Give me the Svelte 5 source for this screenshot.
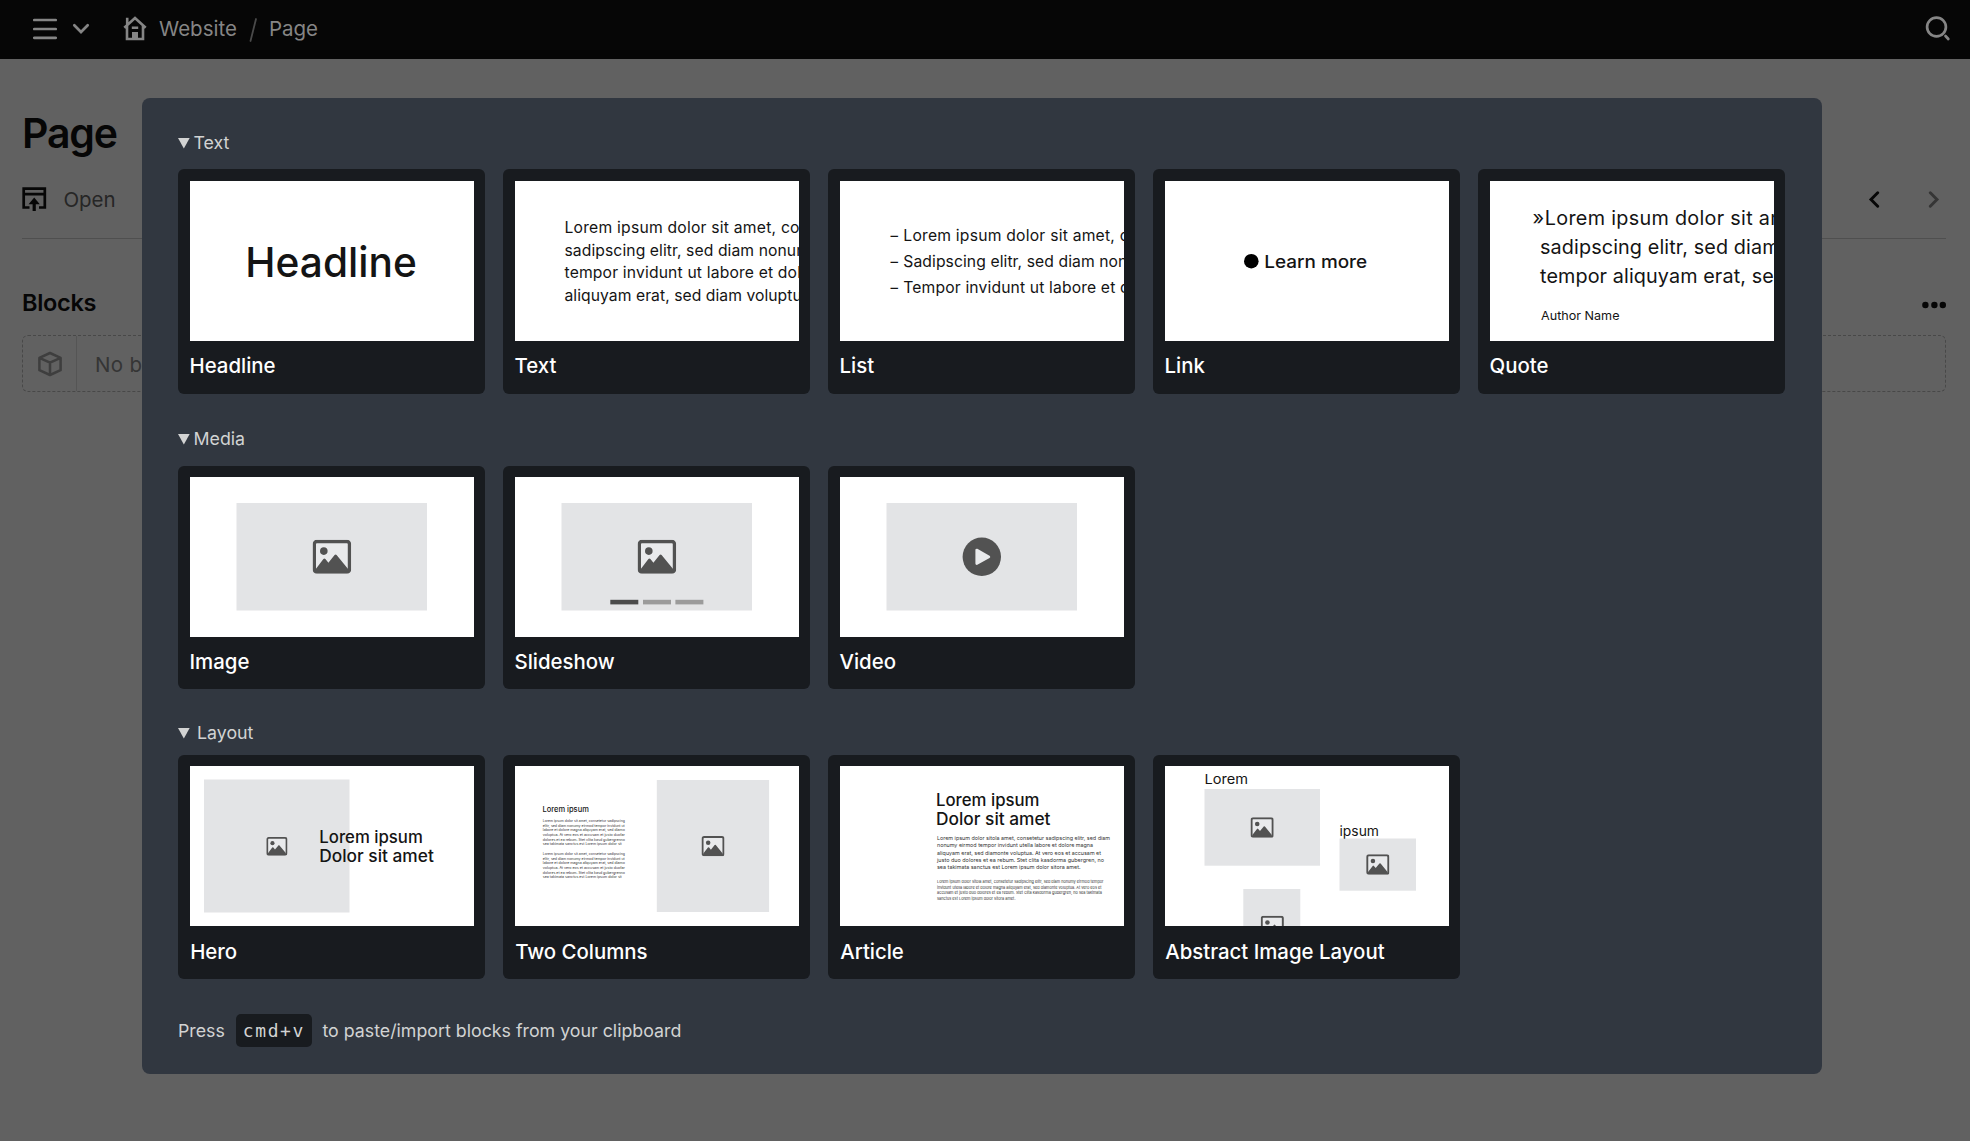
<script>
  // Each preview is drawn on a 284 x 160 canvas.
  // Text lines: [x, baseline, text, size, weight, width?, letter spacing?]
  const para = [
    'Lorem ipsum dolor sit amet, consetetur sadipscing',
    'elitr, sed diam nonumy eirmod tempor invidunt ut',
    'labore et dolore magna aliquyam erat, sed diamo',
    'voluptua. At vero eos et accusam et justo duofar',
    'dolores et ea rebum. Stet clita kasd gubergrenno',
    'sea takimata sanctus est Lorem ipsum dolor sit'
  ];
  const column = (top) =>
    para.map((t, i) => [27.8, top + i * 4.67, t, 3.6, 400, i === 5 ? 79 : 82]);

  const groups = [
    {
      name: 'Text',
      key: 'text',
      cards: [
        { label: 'Headline', texts: [[55.3, 96, 'Headline', 41.5, 500, 171.5]] },
        {
          label: 'Text',
          texts: [
            [49.5, 52.3, 'Lorem ipsum dolor sit amet, consetetur', 15.7, 400, undefined, 0.22],
            [49.5, 74.8, 'sadipscing elitr, sed diam nonumy eirmod', 15.7, 400, undefined, 0.08],
            [49.5, 97.3, 'tempor invidunt ut labore et dolore', 15.7, 400, undefined, 0.16],
            [49.5, 119.8, 'aliquyam erat, sed diam voluptua.', 15.7, 400, undefined, 0.05]
          ]
        },
        {
          label: 'List',
          texts: [
            [50.5, 60.2, '–', 15.7, 400, 7.5],
            [63.3, 60.2, 'Lorem ipsum dolor sit amet, consetetur', 15.7, 400, undefined, 0.22],
            [50.5, 86, '–', 15.7, 400, 7.5],
            [63.3, 86, 'Sadipscing elitr, sed diam nonumy', 15.7, 400, undefined, 0.08],
            [50.5, 112, '–', 15.7, 400, 7.5],
            [63.3, 112, 'Tempor invidunt ut labore et dolore', 15.7, 400, undefined, 0.14]
          ]
        },
        { label: 'Link', dot: true, texts: [[99.2, 86.5, 'Learn more', 17.5, 500, 103]] },
        {
          label: 'Quote',
          texts: [
            [42.5, 44.2, '»', 20, 400],
            [54.8, 44.2, 'Lorem ipsum dolor sit amet', 19.8, 400, undefined, 0.3],
            [50, 73, 'sadipscing elitr, sed diam nonumy', 19.8, 400, undefined, 0.12],
            [50, 101.8, 'tempor aliquyam erat, sed diam', 19.8, 400, undefined, 0.1],
            [51, 138.7, 'Author Name', 12.2, 400, 78.5]
          ]
        }
      ]
    },
    {
      name: 'Media',
      key: 'media',
      cards: [
        { label: 'Image', rects: [[46.5, 26, 190.5, 107.5]], icons: [[122.6, 62.8, 38.6]] },
        {
          label: 'Slideshow',
          rects: [[46.5, 26, 190.5, 107.5]],
          icons: [[122.6, 62.8, 38.6]],
          bars: true
        },
        { label: 'Video', rects: [[46.5, 26, 190.5, 107.5]], play: true }
      ]
    },
    {
      name: 'Layout',
      key: 'layout',
      cards: [
        {
          label: 'Hero',
          rects: [[14, 13.5, 145.5, 133]],
          icons: [[76.3, 71, 21.2]],
          texts: [
            [129.3, 77, 'Lorem ipsum', 16.8, 500, 103.5],
            [129.3, 95.7, 'Dolor sit amet', 16.8, 500, 114.5]
          ]
        },
        {
          label: 'Two Columns',
          rects: [[141.8, 14, 112.3, 132]],
          icons: [[186.5, 70, 23]],
          texts: [[27.5, 46, 'Lorem ipsum', 7.6, 500, 46.3], ...column(56), ...column(89)]
        },
        {
          label: 'Article',
          texts: [
            [96, 40.3, 'Lorem ipsum', 16.8, 500, 103.5],
            [96, 59, 'Dolor sit amet', 16.8, 500, 114.5],
            [97, 73.5, 'Lorem ipsum dolor sitola amet, consetetur sadipscing elitr, sed diam', 5.3, 400, 173],
            [97, 81, 'nonumy eirmod tempor invidunt utella labore et dolore magna', 5.3, 400, 156],
            [97, 88.5, 'aliquyam erat, sed diamonte voluptua. At vero eos et accusam et', 5.3, 400, 164],
            [97, 95.9, 'justo duo dolores et ea rebum. Stet clita kasdorma gubergren, no', 5.3, 400, 167],
            [97, 103.3, 'sea takimata sanctus est Lorem ipsum dolor sitora amet.', 5.3, 400, 143.5],
            [97, 117.2, 'Lorem ipsum dolor sitola amet, consetetur sadipscing elitr, sed diam nonumy eirmod tempor', 3.8, 400, 166.5],
            [97, 122.7, 'invidunt utella labore et dolore magna aliquyam erat, sed diamonte voluptua. At vero eos et', 3.8, 400, 164.5],
            [97, 128.3, 'accusam et justo duo dolores et ea rebum. Stet clita kasdorma gubergren, no sea takimata', 3.8, 400, 165],
            [97, 133.8, 'sanctus est Lorem ipsum dolor sitora amet.', 3.8, 400, 78.5]
          ]
        },
        {
          label: 'Abstract Image Layout',
          rects: [
            [39.5, 23, 115.5, 76.7],
            [174.5, 72.5, 76.5, 52.2],
            [78.3, 123, 57, 50]
          ],
          icons: [
            [85.5, 51.3, 23.2],
            [201.2, 88.3, 23.2],
            [95.7, 149.7, 23.2]
          ],
          texts: [
            [39.5, 18, 'Lorem', 13.6, 400, 43.5],
            [174.5, 69.7, 'ipsum', 13.6, 400, 39.5]
          ]
        }
      ]
    }
  ];
</script>

<div class="page">
  <header>
    <svg class="menu" width="24" height="24" viewBox="0 0 24 24"><path d="M1.3 3h21.4M1.3 12h21.4M1.3 20.8h21.4" /></svg>
    <svg class="chev" width="18" height="12" viewBox="0 0 18 12"><path d="M2.3 2.3 9 9l6.7-6.7" /></svg>
    <svg class="house" width="24" height="25" viewBox="0 0 24 25"><path d="M4 9.5V23h16V9.5M1.3 11.8 12 2l10.7 9.8M4.2 9V1.8" /><path class="door" d="M9 24v-8h6v8zM8.8 10.4h6.4V13H8.8z" /></svg>
    <span class="crumb site">Website</span>
    <svg class="slash" width="9" height="24" viewBox="0 0 9 24"><path d="M1.5 23 7 1" /></svg>
    <span class="crumb">Page</span>
    <svg class="search" width="26" height="26" viewBox="0 0 26 26"><circle cx="11.5" cy="11" r="9.4" /><path d="m20.5 20 2.8 3" /></svg>
  </header>

  <main>
    <h1>Page</h1>
    <div class="toolbar">
      <svg width="25" height="25" viewBox="0 0 25 25" class="open-icon"><path d="M7.5 20.5H1.7V1.7h21.1v18.8H17M1.7 7.2h21.1" /><path d="M12.2 24V14" class="stem" /><path d="m12.2 10.6 5.6 6.6H6.6z" class="tip" /></svg>
      <span>Open</span>
      <div class="pager">
        <svg width="12" height="17" viewBox="0 0 12 17"><path d="M9.7 1.8 3 8.5l6.7 6.7" /></svg>
        <svg class="next" width="12" height="17" viewBox="0 0 12 17"><path d="M2.3 1.8 9 8.5l-6.7 6.7" /></svg>
      </div>
    </div>
    <div class="blocks-head">
      <h2>Blocks</h2>
      <svg width="26" height="8" viewBox="0 0 26 8"><circle cx="5.4" cy="4" r="3.2" /><circle cx="14.4" cy="4" r="3.2" /><circle cx="22.8" cy="4" r="3.2" /></svg>
    </div>
    <div class="empty">
      <div class="cube">
        <svg width="26" height="26" viewBox="0 0 26 26"><path d="M13 2 23.6 6.8v12.4L13 24 2.4 19.2V6.8zM2.4 6.8 13 11.6l10.6-4.8M13 11.6V24" /></svg>
      </div>
      <span>No blocks yet</span>
    </div>
  </main>

  <div class="dialog" role="dialog">
    {#each groups as group}
      <section class={group.key}>
        <div class="summary">
          <svg width="12" height="11" viewBox="0 0 12 11"><path d="M0 0h11.7L5.85 10.6z" /></svg>
          <span>{group.name}</span>
        </div>
        <div class="cards">
          {#each group.cards as card}
            <div class="card">
              <svg class="preview" viewBox="0 0 284 160" preserveAspectRatio="none">
                <rect width="284" height="160" fill="#fff" />
                {#each card.rects ?? [] as [x, y, w, h]}
                  <rect {x} {y} width={w} height={h} fill="#e3e4e6" />
                {/each}
                {#each card.icons ?? [] as [x, y, w]}
                  <svg {x} {y} width={w} height={w * 0.88} viewBox="0 0 38.6 34">
                    <rect x="1.7" y="1.7" width="35.2" height="30.6" rx="2.6" fill="#e9eaec" stroke="#525252" stroke-width="3.4" />
                    <circle cx="11.2" cy="11.3" r="3.8" fill="#525252" />
                    <path d="M3 29.5 10.8 19.3q1-1 2 0l3 3.6 6.2-7.6q1-1 2 0L35.5 29.3V32H3z" fill="#525252" />
                  </svg>
                {/each}
                {#if card.bars}
                  <rect x="95.3" y="122.8" width="28" height="4.6" fill="#4c4c4c" />
                  <rect x="128" y="122.8" width="28" height="4.6" fill="#9b9b9b" />
                  <rect x="160.4" y="122.8" width="28" height="4.6" fill="#9b9b9b" />
                {/if}
                {#if card.play}
                  <circle cx="141.8" cy="79.8" r="19.2" fill="#525252" />
                  <path d="M136.7 73v13.6l12.2-6.8z" fill="#e9eaec" stroke="#e9eaec" stroke-width="2.6" stroke-linejoin="round" />
                {/if}
                {#if card.dot}
                  <circle cx="86.3" cy="80.2" r="7.3" fill="#000" />
                {/if}
                {#each card.texts ?? [] as [x, y, text, size, weight, width, spacing]}
                  <text
                    {x}
                    {y}
                    class:fine={size < 7}
                    font-size={size}
                    font-weight={weight}
                    letter-spacing={spacing}
                    textLength={width}
                    lengthAdjust="spacingAndGlyphs">{text}</text>
                {/each}
              </svg>
              <div class="label">{card.label}</div>
            </div>
          {/each}
        </div>
      </section>
    {/each}
    <footer><span>Press</span><kbd>cmd+v</kbd><span>to paste/import blocks from your clipboard</span></footer>
  </div>
</div>

<style>
  :global(body) { background: #616161; }
  .page {
    position: relative;
    height: 1141px;
    overflow: hidden;
    background: #616161;
    font-family: Inter, 'Liberation Sans', sans-serif;
  }
  svg { display: block; flex: none; }
  header {
    display: flex;
    align-items: center;
    box-sizing: border-box;
    height: 58.5px;
    padding: 0 19px 1px 33px;
    background: #060606;
    color: #858585;
  }
  header svg { fill: none; stroke: #858585; stroke-width: 2.7; stroke-linecap: round; }
  .chev { margin-left: 15px; }
  .house { margin-left: 33px; }
  header .house { stroke-width: 2.6; stroke-linecap: butt; }
  header .door { fill: #858585; stroke: none; }
  .crumb { font-size: 20.5px; line-height: 24px; letter-spacing: 0; }
  .site { margin-left: 12px; }
  .slash { margin: 3px 11px 0 12px; }
  header .slash { stroke: #4a4a4a; stroke-width: 1.8; }
  .search { margin-left: auto; }
  header .search { stroke-width: 2.7; }

  main { padding: 0 24px 0 22px; }
  h1 {
    margin: 0;
    padding-top: 49.5px;
    font-size: 41px;
    line-height: 50px;
    font-weight: 600;
    letter-spacing: -1.2px;
    color: #060606;
  }
  .toolbar {
    display: flex;
    align-items: center;
    box-sizing: border-box;
    height: 81px;
    padding-top: 3px;
    border-bottom: 1px solid #4f4f4f;
    font-size: 20.5px;
    color: #262626;
  }
  .toolbar span { margin-left: 16.5px; letter-spacing: -0.1px; }
  .open-icon path { fill: none; stroke: #060606; stroke-width: 2.7; }
  .open-icon .stem { stroke-width: 3.2; }
  .open-icon .tip { fill: #060606; stroke: none; }
  .pager { display: flex; gap: 48px; margin-left: auto; padding-right: 6px; }
  .pager path { fill: none; stroke: #060606; stroke-width: 2.9; stroke-linecap: round; }
  .pager .next path { stroke: #353535; }
  .blocks-head {
    display: flex;
    align-items: center;
    justify-content: space-between;
    height: 30px;
    padding-top: 48.5px;
  }
  h2 { margin: 0; font-size: 23.5px; font-weight: 600; letter-spacing: -0.3px; color: #060606; }
  .blocks-head svg { margin-top: 5px; fill: #060606; }
  .empty {
    display: flex;
    box-sizing: border-box;
    height: 57px;
    margin-top: 17.5px;
    border: 1px dashed #484848;
    border-radius: 6px;
    font-size: 20.5px;
    line-height: 57px;
    color: #353535;
  }
  .cube {
    display: flex;
    align-items: center;
    justify-content: center;
    width: 53px;
    border-right: 1px solid #555;
  }
  .cube path { fill: none; stroke: #3e3e3e; stroke-width: 2.5; stroke-linejoin: round; }
  .empty span { margin-left: 18px; letter-spacing: 0.3px; }

  .dialog {
    position: absolute;
    top: 98px;
    left: 142px;
    box-sizing: border-box;
    width: 1679.5px;
    height: 976px;
    padding: 35.3px 36px 0;
    border-radius: 8px;
    background: #313740;
    color: #d2d3d3;
  }
  .summary {
    display: flex;
    align-items: center;
    height: 20px;
    gap: 3.5px;
    font-size: 17.8px;
    line-height: 20px;
    margin-bottom: 16.2px;
  }
  .summary path { fill: #d2d3d3; }
  .media { margin-top: 35.7px; }
  .layout { margin-top: 34.7px; }
  .layout .summary { margin-bottom: 11.3px; gap: 7px; }
  .cards { display: flex; gap: 18px; }
  .card {
    box-sizing: border-box;
    width: 307px;
    height: 224.3px;
    padding: 11.5px;
    border-radius: 6px;
    background: #181b1f;
  }
  .media .card { height: 223px; }
  .preview { width: 284px; height: 160px; overflow: hidden; }
  .preview text { fill: #141414; }
  .preview .fine { fill: #333; }
  .label {
    margin-top: 13.5px;
    font-size: 20.4px;
    line-height: 24px;
    font-weight: 500;
    letter-spacing: 0;
    color: #fff;
  }
  .media .label { margin-top: 12.5px; }
  .layout .label { margin: 14.3px 0 0 0.7px; }
  footer {
    display: flex;
    align-items: center;
    height: 33px;
    margin-top: 35px;
    font-size: 17.8px;
    white-space: nowrap;
  }
  kbd {
    box-sizing: border-box;
    width: 76px;
    margin: 0 10.5px 0 11px;
    border-radius: 5px;
    background: #181b1f;
    font-family: 'DejaVu Sans Mono', monospace;
    font-size: 18px;
    line-height: 33px;
    letter-spacing: 1.6px;
    text-align: center;
  }
</style>
